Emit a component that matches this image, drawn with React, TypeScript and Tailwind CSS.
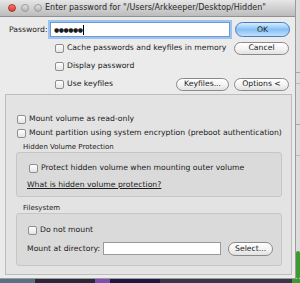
import clsx from "clsx";
import type { ReactNode } from "react";

function Check() {
  return (
    <span className="h-[9px] w-[9px] shrink-0 rounded-[2px] border border-[#8e8e8e] bg-gradient-to-b from-white to-[#e4e4e4]" />
  );
}

function CheckRow({ label, className }: { label: string; className?: string }) {
  return (
    <div className={clsx("flex h-[12px] items-center gap-[3px]", className)}>
      <Check />
      <span className="whitespace-nowrap">{label}</span>
    </div>
  );
}

function AquaButton({ children, primary, className }: { children: ReactNode; primary?: boolean; className?: string }) {
  return (
    <div
      className={clsx(
        "flex shrink-0 items-center justify-center whitespace-nowrap rounded-full border",
        primary
          ? "border-[#4a7cbf] bg-gradient-to-b from-[#d8edfe] via-[#86c0f4] to-[#bfe0fc]"
          : "border-[#8a8a8a] bg-gradient-to-b from-white via-[#f4f4f4] to-[#e2e2e2]",
        className,
      )}
    >
      {children}
    </div>
  );
}

function GroupBox({ title, children, className }: { title: string; children: ReactNode; className?: string }) {
  return (
    <>
      <div className={clsx("flex h-[10px] items-center pl-[17px] text-[7px]", className)}>{title}</div>
      <div className="ml-[10px] mr-[9px] rounded-[3px] border border-[#c6c6c6] bg-[#dadada]">{children}</div>
    </>
  );
}

function Window() {
  return (
    <div className="flex h-[279px] w-[296px] shrink-0 flex-col border-b border-r border-[#9c9c9c] bg-[#ebebeb]">
      {/* Title bar */}
      <div className="flex h-[17px] shrink-0 items-center border-b border-[#909090] bg-gradient-to-b from-[#e6e6e6] to-[#bcbcbc] pl-[8px]">
        <span className="h-[8px] w-[8px] rounded-full border border-[#b0342c] bg-gradient-to-b from-[#f4776e] to-[#d6382e]" />
        <span className="ml-[5px] h-[8px] w-[8px] rounded-full border border-[#9a9a9a] bg-gradient-to-b from-[#e4e4e4] to-[#b4b4b4]" />
        <span className="ml-[5px] h-[8px] w-[8px] rounded-full border border-[#9a9a9a] bg-gradient-to-b from-[#e4e4e4] to-[#b4b4b4]" />
        <span className="ml-[3px] whitespace-nowrap text-[8px] text-[#2a2a2a]">
          Enter password for "/Users/Arkkeeper/Desktop/Hidden"
        </span>
      </div>

      {/* Password area */}
      <div className="mt-[5px] flex h-[15px] items-center">
        <span className="w-[50px] pl-[9px]">Password:</span>
        <div className="flex h-[15px] w-[180px] items-center border border-[#6f9ad0] bg-white pl-[3px] shadow-[0_0_0_2px_#9dc3f0]">
          <span className="text-[6px] leading-none tracking-[-0.5px]">●●●●●●</span>
          <span className="ml-[1px] h-[10px] w-px bg-black" />
        </div>
        <AquaButton primary className="ml-[5px] h-[15px] w-[55px]">OK</AquaButton>
      </div>
      <div className="mt-[5px] flex h-[12px] items-center">
        <CheckRow label="Cache passwords and keyfiles in memory" className="pl-[55px]" />
        <div className="flex-1" />
        <AquaButton className="mr-[6px] h-[13px] w-[55px]">Cancel</AquaButton>
      </div>
      <CheckRow label="Display password" className="mt-[6px] pl-[55px]" />
      <div className="mt-[6px] flex h-[12px] items-center">
        <CheckRow label="Use keyfiles" className="pl-[55px]" />
        <div className="flex-1" />
        <AquaButton className="h-[13px] w-[53px]">Keyfiles...</AquaButton>
        <AquaButton className="ml-[5px] mr-[6px] h-[13px] w-[55px]">Options &lt;</AquaButton>
      </div>

      {/* Options panel */}
      <div className="mb-[3px] ml-[5px] mr-[3px] mt-[4px] flex flex-1 flex-col border border-[#bdbdbd] bg-[#e3e3e3]">
        <CheckRow label="Mount volume as read-only" className="mt-[18px] pl-[11px]" />
        <CheckRow label="Mount partition using system encryption (preboot authentication)" className="mt-[2px] pl-[11px]" />

        <GroupBox title="Hidden Volume Protection" className="mt-[3px]">
          <CheckRow label="Protect hidden volume when mounting outer volume" className="mt-[9px] pl-[12px]" />
          <div className="mb-[6px] mt-[6px] h-[10px] pl-[10px] leading-[10px] underline">What is hidden volume protection?</div>
        </GroupBox>

        <GroupBox title="Filesystem" className="mt-[6px]">
          <CheckRow label="Do not mount" className="mt-[10px] pl-[11px]" />
          <div className="mb-[10px] mt-[6px] flex h-[13px] items-center pl-[10px]">
            <span className="mr-[3px] whitespace-nowrap">Mount at directory:</span>
            <div className="h-[13px] w-[118px] border border-[#9a9a9a] bg-white" />
            <AquaButton className="ml-[7px] h-[14px] w-[45px]">Select...</AquaButton>
          </div>
        </GroupBox>
      </div>
    </div>
  );
}

export default function App() {
  return (
    <div className="flex h-[283px] w-[300px] flex-col overflow-hidden bg-[#17152a] font-['DejaVu_Sans',sans-serif] text-[7.7px] text-[#1b1b1b]">
      <div className="flex h-[279px] shrink-0">
        <Window />
        {/* neighbouring window peeking out */}
        <div className="flex flex-1 flex-col bg-[#dcdcdc]">
          <div className="mt-[72px] h-px bg-[#a8a8a8]" />
          <div className="mt-[10px] h-px bg-[#b8b8b8]" />
          <div className="mt-[40px] h-px bg-[#a8a8a8]" />
          <div className="mt-[30px] h-px bg-[#b8b8b8]" />
          <div className="mt-[95px] h-[30px] w-[4px] rounded-full bg-[#3d9a2e]" />
        </div>
      </div>
      {/* desktop below */}
      <div className="flex flex-1">
        <div className="w-[35px] bg-[#5a6f88]" />
        <div className="w-[60px] bg-[#2a2738]" />
        <div className="w-[15px] bg-[#7a4fb0]" />
        <div className="w-[50px] bg-[#1b1840]" />
        <div className="flex-1 bg-[#3a3548]" />
        <div className="w-[8px] bg-[#3d9a2e]" />
      </div>
    </div>
  );
}
